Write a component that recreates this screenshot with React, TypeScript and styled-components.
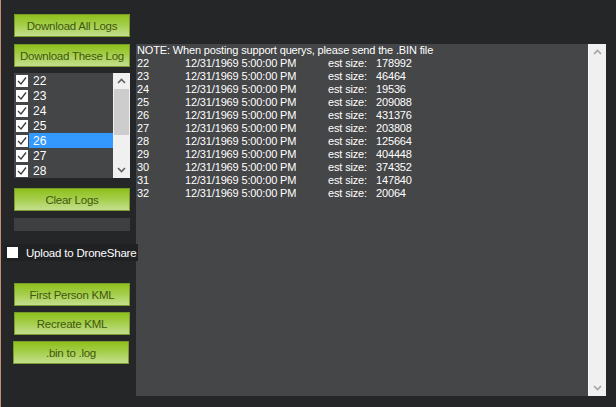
import styled, { createGlobalStyle } from "styled-components";

interface LogEntry {
  id: number;
  date: string;
  size: number;
}

const logs: LogEntry[] = [
  { id: 22, date: "12/31/1969 5:00:00 PM", size: 178992 },
  { id: 23, date: "12/31/1969 5:00:00 PM", size: 46464 },
  { id: 24, date: "12/31/1969 5:00:00 PM", size: 19536 },
  { id: 25, date: "12/31/1969 5:00:00 PM", size: 209088 },
  { id: 26, date: "12/31/1969 5:00:00 PM", size: 431376 },
  { id: 27, date: "12/31/1969 5:00:00 PM", size: 203808 },
  { id: 28, date: "12/31/1969 5:00:00 PM", size: 125664 },
  { id: 29, date: "12/31/1969 5:00:00 PM", size: 404448 },
  { id: 30, date: "12/31/1969 5:00:00 PM", size: 374352 },
  { id: 31, date: "12/31/1969 5:00:00 PM", size: 147840 },
  { id: 32, date: "12/31/1969 5:00:00 PM", size: 20064 },
];

const GlobalStyle = createGlobalStyle`
  html, body {
    margin: 0;
    padding: 0;
    background: #252628;
  }
  * {
    box-sizing: border-box;
  }
`;

const Page = styled.div`
  display: flex;
  width: 616px;
  height: 407px;
  padding-left: 13px;
  border-left: 1px solid #c48d78;
  background: #252628;
  font-family: "Liberation Sans", Arial, sans-serif;
  overflow: hidden;
`;

const Sidebar = styled.div`
  display: flex;
  flex-direction: column;
  width: 116px;
  padding-top: 14px;
`;

const GreenButton = styled.button<{ $top: number; $shift?: number }>`
  display: block;
  width: 116px;
  height: 23px;
  margin: ${(p) => p.$top}px 0 0 ${(p) => p.$shift ?? 0}px;
  padding: 0;
  border: 1px solid #7a9a2c;
  background: linear-gradient(to bottom, #8ec01b 0%, #a6cf4e 50%, #c4df8f 100%);
  color: #3f580d;
  font-family: "Liberation Sans", Arial, sans-serif;
  font-size: 11.5px;
  letter-spacing: -0.25px;
  white-space: nowrap;
  text-align: center;
  cursor: pointer;
`;

const CheckList = styled.div`
  display: flex;
  width: 116px;
  height: 105px;
  margin-top: 6px;
  background: #444547;
`;

const CheckItems = styled.ul`
  flex: 1;
  margin: 0;
  padding: 0;
  list-style: none;
`;

const CheckItem = styled.li`
  display: flex;
  align-items: center;
  height: 15px;
  padding-left: 2px;
  color: #fff;
  font-size: 12px;
`;

const ItemText = styled.span<{ $selected?: boolean }>`
  display: flex;
  align-items: center;
  flex: 1;
  height: 15px;
  margin-left: 1px;
  padding-left: 4px;
  background: ${(p) => (p.$selected ? "#3399ff" : "transparent")};
`;

const Box = styled.span`
  display: flex;
  align-items: center;
  justify-content: center;
  width: 12px;
  height: 12px;
  background: #fff;
`;

const ScrollBar = styled.div<{ $height: number }>`
  display: flex;
  flex-direction: column;
  justify-content: space-between;
  width: 17px;
  height: ${(p) => p.$height}px;
  background: #f0f0f0;
  position: relative;
`;

const ScrollArrow = styled.div`
  display: flex;
  align-items: center;
  justify-content: center;
  height: 16px;
`;

const Thumb = styled.div`
  position: absolute;
  top: 16px;
  left: 1px;
  width: 15px;
  height: 46px;
  background: #cdcdcd;
`;

const Progress = styled.div`
  width: 116px;
  height: 13px;
  margin-top: 7px;
  background: #3e3f41;
`;

const UploadRow = styled.label`
  display: flex;
  align-items: center;
  width: 134px;
  height: 17px;
  margin: 13px 0 0 -10px;
  padding-left: 3px;
  background: #202123;
  color: #fff;
  font-size: 11.5px;
  letter-spacing: -0.2px;
  white-space: nowrap;
  position: relative;
  z-index: 1;
`;

const PlainBox = styled.span`
  flex: none;
  width: 11px;
  height: 11px;
  margin-right: 8px;
  background: #fff;
`;

const LogPanel = styled.div`
  display: flex;
  width: 470px;
  height: 352px;
  margin: 44px 0 0 6px;
  background: #454648;
`;

const LogText = styled.div`
  flex: 1;
  padding: 0 0 0 1px;
  border-right: 1px solid #fafafa;
  color: #fff;
  font-size: 11px;
  line-height: 13px;
  letter-spacing: -0.15px;
`;

const LogRow = styled.div`
  display: grid;
  grid-template-columns: 48px 143px 48px auto;
  white-space: nowrap;
`;

const Check = () => (
  <svg width="10" height="10" viewBox="0 0 10 10">
    <path d="M1 5 L4 8 L9 1.5" stroke="#3c3c3c" strokeWidth="1.3" fill="none" />
  </svg>
);

const Chevron = ({ up, color }: { up?: boolean; color: string }) => (
  <svg width="9" height="6" viewBox="0 0 9 6">
    <path
      d={up ? "M1 5 L4.5 1.5 L8 5" : "M1 1 L4.5 4.5 L8 1"}
      stroke={color}
      strokeWidth="1.6"
      fill="none"
    />
  </svg>
);

function App() {
  const visible = logs.slice(0, 7);

  return (
    <Page>
      <GlobalStyle />
      <Sidebar>
        <GreenButton $top={0}>Download All Logs</GreenButton>
        <GreenButton $top={7}>Download These Log</GreenButton>
        <CheckList>
          <CheckItems>
            {visible.map((log) => (
              <CheckItem key={log.id}>
                <Box>
                  <Check />
                </Box>
                <ItemText $selected={log.id === 26}>{log.id}</ItemText>
              </CheckItem>
            ))}
          </CheckItems>
          <ScrollBar $height={105}>
            <ScrollArrow>
              <Chevron up color="#606060" />
            </ScrollArrow>
            <Thumb />
            <ScrollArrow>
              <Chevron color="#606060" />
            </ScrollArrow>
          </ScrollBar>
        </CheckList>
        <GreenButton $top={10}>Clear Logs</GreenButton>
        <Progress />
        <UploadRow>
          <PlainBox />
          Upload to DroneShare
        </UploadRow>
        <GreenButton $top={22}>First Person KML</GreenButton>
        <GreenButton $top={6}>Recreate KML</GreenButton>
        <GreenButton $top={6} $shift={-1}>
          .bin to .log
        </GreenButton>
      </Sidebar>
      <LogPanel>
        <LogText>
          <div>NOTE: When posting support querys, please send the .BIN file</div>
          {logs.map((log) => (
            <LogRow key={log.id}>
              <span>{log.id}</span>
              <span>{log.date}</span>
              <span>est size:</span>
              <span>{log.size}</span>
            </LogRow>
          ))}
        </LogText>
        <ScrollBar $height={352}>
          <ScrollArrow>
            <Chevron up color="#a3a3a3" />
          </ScrollArrow>
          <ScrollArrow>
            <Chevron color="#a3a3a3" />
          </ScrollArrow>
        </ScrollBar>
      </LogPanel>
    </Page>
  );
}

export default App;
